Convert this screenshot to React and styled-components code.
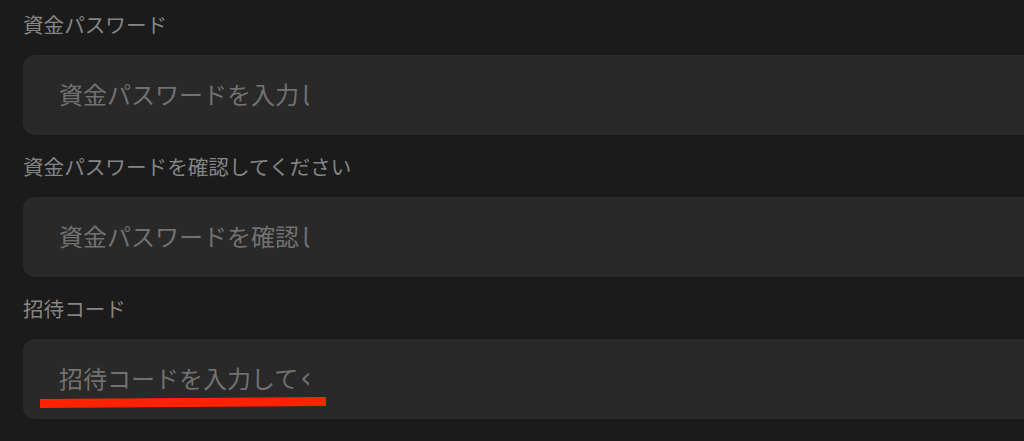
import React from "react";
import styled, { createGlobalStyle } from "styled-components";

const Global = createGlobalStyle`
  html, body {
    margin: 0;
    padding: 0;
    background: #1b1b1b;
    overflow: hidden;
  }
  body {
    font-family: "Noto Sans CJK JP", "Noto Sans", sans-serif;
  }
`;

const Page = styled.div`
  width: 1024px;
  height: 441px;
  background: #1b1b1b;
  padding: 10px 0 0 23px;
  box-sizing: border-box;
  overflow: hidden;
`;

const Form = styled.div`
  display: flex;
  flex-direction: column;
  gap: 17px;
  width: 1060px;
`;

const Field = styled.div`
  display: flex;
  flex-direction: column;
  gap: 17px;
`;

const Label = styled.div`
  height: 28px;
  line-height: 28px;
  font-size: 20.6px;
  color: #858585;
  white-space: nowrap;
`;

const Box = styled.div`
  position: relative;
  height: 80px;
  border-radius: 12px;
  background: #292929;
  display: flex;
  align-items: center;
  padding-left: 36px;
`;

const Input = styled.input`
  width: 250px;
  height: 36px;
  padding: 0;
  margin: 0;
  border: none;
  outline: none;
  background: transparent;
  font-family: "Noto Sans CJK JP", "Noto Sans", sans-serif;
  font-size: 24px;
  color: #d0d0d0;
  margin-top: -4px;
  &::placeholder {
    color: #717171;
    opacity: 1;
  }
`;

const Mark = styled.div`
  position: absolute;
  left: 17px;
  top: 60px;
  width: 286px;
  height: 9px;
  background: #ff2200;
  transform: rotate(-0.4deg);
  transform-origin: left center;
`;

const fields = [
  { label: "資金パスワード", placeholder: "資金パスワードを入力してください", type: "password" },
  { label: "資金パスワードを確認してください", placeholder: "資金パスワードを確認してください", type: "password" },
  { label: "招待コード", placeholder: "招待コードを入力してください", type: "text", marked: true },
];

export default function App() {
  return (
    <>
      <Global />
      <Page>
        <Form>
          {fields.map((f) => (
            <Field key={f.label}>
              <Label>{f.label}</Label>
              <Box>
                <Input type={f.type} placeholder={f.placeholder} />
                {f.marked && <Mark />}
              </Box>
            </Field>
          ))}
        </Form>
      </Page>
    </>
  );
}
